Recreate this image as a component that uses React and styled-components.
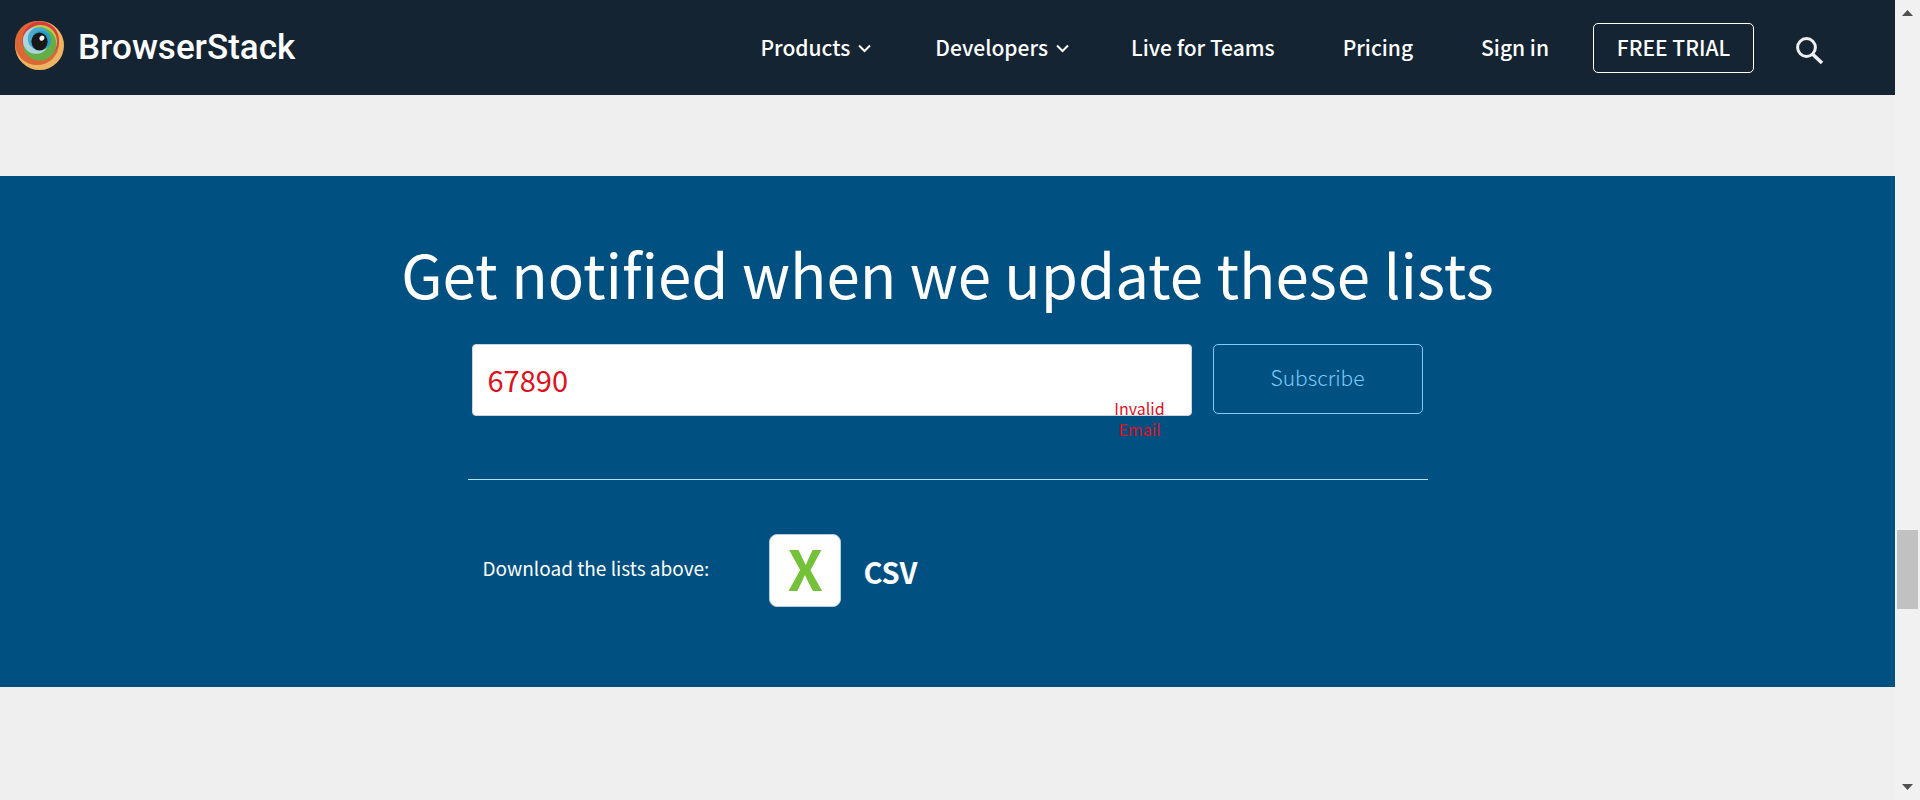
import React, { useState } from "react";
import styled, { createGlobalStyle } from "styled-components";

const Global = createGlobalStyle`
  *, *::before, *::after { box-sizing: border-box; }
  body {
    margin: 0;
    background: #efefef;
    font-family: "Noto Sans CJK SC", "Noto Sans", sans-serif;
  }
`;

const Shell = styled.div`
  display: flex;
  min-height: 100vh;
`;

const Page = styled.div`
  flex: 1;
  min-width: 0;
`;

const Header = styled.header`
  display: flex;
  align-items: center;
  justify-content: space-between;
  height: 95px;
  padding: 0 71px 0 15px;
  background: #152433;
  color: #fff;
`;

const Brand = styled.a`
  display: flex;
  align-items: flex-start;
  gap: 14px;
  color: #fff;
  text-decoration: none;
  font: 500 35px/53px Roboto, sans-serif;
`;

const Nav = styled.nav`
  display: flex;
  align-items: center;
`;

const NavLink = styled.a`
  display: flex;
  align-items: center;
  gap: 8px;
  margin-right: ${(p) => p.$gap || 68}px;
  padding-bottom: 2px;
  color: #fff;
  font-size: 21px;
  font-weight: 500;
  line-height: 32px;
  text-decoration: none;
  white-space: nowrap;

  svg { margin-top: 4px; }
`;

const TrialLink = styled(NavLink)`
  justify-content: center;
  width: 161px;
  height: 50px;
  margin-right: 42px;
  border: 1px solid #fff;
  border-radius: 5px;
`;

const IconButton = styled.button`
  display: flex;
  padding: 6px 0 0;
  border: 0;
  background: none;
  color: #efefef;
`;

const Notify = styled.main`
  display: flex;
  flex-direction: column;
  align-items: center;
  margin-top: 81px;
  padding: 57px 20px 80px;
  background: #005082;
  color: #fff;
`;

const Title = styled.h1`
  margin: 0;
  font-size: 60px;
  font-weight: 400;
  line-height: 80px;
  text-align: center;
`;

const Form = styled.form`
  display: flex;
  gap: 21px;
  width: 100%;
  max-width: 960px;
  margin-top: 31px;
  padding: 0 5px 63px 4px;
  border-bottom: 1px solid #b5e2fa;
`;

const Field = styled.div`
  position: relative;
  flex: 1;
`;

const EmailInput = styled.input`
  display: block;
  width: 100%;
  height: 72px;
  padding: 0 15px 2px;
  border: 1px solid #ccd3dc;
  border-radius: 4px;
  outline: 0;
  background: #fff;
  color: #e0101c;
  font: 400 29px/40px "Noto Sans CJK SC", sans-serif;
`;

const ErrorText = styled.span`
  position: absolute;
  top: 54px;
  right: 20px;
  width: 64px;
  color: #e0101c;
  font-size: 16px;
  line-height: 21px;
  text-align: center;
`;

const SubscribeButton = styled.button`
  width: 210px;
  height: 70px;
  padding: 0 0 4px;
  border: 1px solid #7dcbf8;
  border-radius: 5px;
  background: none;
  color: #7dcbf8;
  font: 300 21px/32px "Noto Sans CJK SC", sans-serif;
`;

const Downloads = styled.div`
  display: flex;
  align-items: center;
  gap: 60px;
  width: 100%;
  max-width: 960px;
  margin-top: 54px;
  padding: 0 15px;
`;

const DownloadsLabel = styled.span`
  padding-bottom: 6px;
  font-size: 19px;
  line-height: 28px;
`;

const CsvLink = styled.a`
  display: flex;
  align-items: center;
  gap: 22px;
  color: #fff;
  font-size: 29px;
  font-weight: 700;
  line-height: 44px;
  text-decoration: none;
`;

const CsvIcon = styled.span`
  display: flex;
  align-items: center;
  justify-content: center;
  width: 72px;
  height: 73px;
  padding-bottom: 8px;
  border: 1px solid #b9cddb;
  border-radius: 8px;
  background: #fff;
  color: #73c23a;
  font-size: 56px;
  line-height: 64px;
`;

const Scrollbar = styled.div`
  display: flex;
  flex-direction: column;
  align-items: center;
  width: 25px;
  padding: 10px 0;
  background: #f1f1f1;
`;

const Thumb = styled.div`
  width: 21px;
  height: 79px;
  background: #c1c1c1;
`;

const Track = styled.div`
  flex: ${(p) => p.$share} 1 0;
`;

function Logo() {
  return (
    <svg width="49" height="49" viewBox="0 0 50 50" aria-hidden="true">
      <circle cx="25" cy="25" r="25" fill="#edb562" />
      <circle cx="22.500" cy="22.500" r="22.500" fill="#dc6635" />
      <circle cx="26" cy="19.500" r="18.800" fill="#da3b41" />
      <circle cx="26" cy="21" r="17" fill="#b9cf3f" />
      <circle cx="25.200" cy="23.500" r="17" fill="#66ad48" />
      <circle cx="21.500" cy="20" r="13.500" fill="#a9d5df" />
      <circle cx="24.500" cy="18" r="11.500" fill="#4aa9cc" />
      <circle cx="27" cy="19.500" r="9.800" fill="#259fc5" />
      <ellipse cx="25" cy="21" rx="8.300" ry="9.200" fill="#191818" />
      <ellipse cx="27.500" cy="17.500" rx="2.300" ry="2.800" transform="rotate(35 27.500 17.500)" fill="#fff" />
    </svg>
  );
}

function Chevron() {
  return (
    <svg width="13" height="9" viewBox="0 0 13 9" fill="none" stroke="currentColor" strokeWidth="2" aria-hidden="true">
      <path d="M1 1.500 6.500 7 12 1.500" />
    </svg>
  );
}

function SearchIcon() {
  return (
    <svg width="28" height="28" viewBox="0 0 28 28" fill="none" stroke="currentColor" aria-hidden="true">
      <circle cx="10.500" cy="10.500" r="8.900" strokeWidth="3" />
      <path d="m17 17.500 9 8.500" strokeWidth="3.600" />
    </svg>
  );
}

function Arrow({ down }) {
  return (
    <svg width="11" height="6" viewBox="0 0 11 6" fill="#505050" aria-hidden="true">
      <path d={down ? "M0 0h11L5.500 6z" : "M0 6h11L5.500 0z"} />
    </svg>
  );
}

export default function App() {
  const [email, setEmail] = useState("67890");
  return (
    <Shell>
      <Global />
      <Page>
        <Header>
          <Brand href="#">
            <Logo />
            BrowserStack
          </Brand>
          <Nav>
            <NavLink href="#" $gap={64}>Products <Chevron /></NavLink>
            <NavLink href="#" $gap={62}>Developers <Chevron /></NavLink>
            <NavLink href="#">Live for Teams</NavLink>
            <NavLink href="#">Pricing</NavLink>
            <NavLink href="#" $gap={44}>Sign in</NavLink>
            <TrialLink href="#">FREE TRIAL</TrialLink>
            <IconButton type="button" aria-label="Search"><SearchIcon /></IconButton>
          </Nav>
        </Header>
        <Notify>
          <Title>Get notified when we update these lists</Title>
          <Form onSubmit={(e) => e.preventDefault()}>
            <Field>
              <EmailInput
                type="text"
                aria-label="Email"
                aria-invalid="true"
                aria-describedby="email-error"
                value={email}
                onChange={(e) => setEmail(e.target.value)}
              />
              <ErrorText id="email-error">Invalid Email</ErrorText>
            </Field>
            <SubscribeButton type="submit">Subscribe</SubscribeButton>
          </Form>
          <Downloads>
            <DownloadsLabel>Download the lists above:</DownloadsLabel>
            <CsvLink href="#">
              <CsvIcon>X</CsvIcon>
              CSV
            </CsvLink>
          </Downloads>
        </Notify>
      </Page>
      <Scrollbar aria-hidden="true">
        <Arrow />
        <Track $share={514} />
        <Thumb />
        <Track $share={175} />
        <Arrow down />
      </Scrollbar>
    </Shell>
  );
}
